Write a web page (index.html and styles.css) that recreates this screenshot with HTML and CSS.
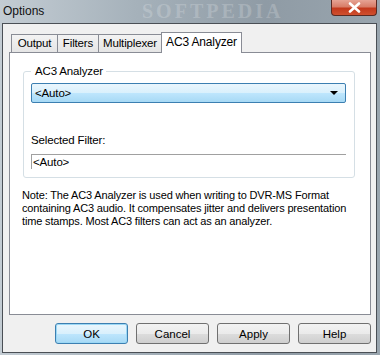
FILE: index.html
```html
<!DOCTYPE html>
<html lang="en">

<head>
    <meta charset="UTF-8">
    <title>Options</title>
    <link rel="stylesheet" href="styles.css">
</head>

<body>
    <div class="window">
        <div class="titlebar">
            <span class="title">Options</span>
            <span class="watermark">SOFTPEDIA</span>
            <button type="button" class="close-btn">
                <svg width="13" height="11" viewBox="0 0 13 11">
                    <path d="M2 1.5 L11 9.5 M11 1.5 L2 9.5" stroke="#fff" stroke-width="2.6" stroke-linecap="round" />
                </svg>
            </button>
        </div>

        <div class="client">
            <div class="tabs">
                <div class="tab tab-output">Output</div>
                <div class="tab tab-filters">Filters</div>
                <div class="tab tab-mux">Multiplexer</div>
                <div class="tab tab-active">AC3 Analyzer</div>
            </div>

            <div class="panel">
                <fieldset class="group">
                    <legend>AC3 Analyzer</legend>
                    <div class="combo">
                        <span>&lt;Auto&gt;</span>
                        <span class="arrow"></span>
                    </div>
                    <div class="field-label">Selected Filter:</div>
                    <div class="static-box">&lt;Auto&gt;</div>
                </fieldset>

                <p class="note">Note: The AC3 Analyzer is used when writing to DVR-MS Format containing AC3 audio. It compensates jitter and delivers presentation time stamps. Most AC3 filters can act as an analyzer.</p>
            </div>

            <div class="buttons">
                <button type="button" class="btn btn-default">OK</button>
                <button type="button" class="btn">Cancel</button>
                <button type="button" class="btn">Apply</button>
                <button type="button" class="btn">Help</button>
            </div>
        </div>
    </div>
</body>

</html>
```

FILE: styles.css
```css
body {
    margin: 0;
    font-family: "Liberation Sans", Arial, sans-serif;
    font-size: 11px;
    letter-spacing: -0.15px;
    color: #000;
}

.window {
    width: 380px;
    height: 355px;
    background: linear-gradient(90deg, #c3ccd3 0%, #a6b2bb 35%, #8f9ba5 70%, #99a5ae 100%);
    overflow: hidden;
}

/* title bar */
.titlebar {
    height: 23px;
    position: relative;
    display: flex;
    align-items: center;
}

.title {
    padding-left: 3px;
    font-size: 12px;
    letter-spacing: 0;
    color: #111;
    padding-bottom: 2px;
}

.watermark {
    position: absolute;
    left: 142px;
    top: 0;
    font-family: "Liberation Serif", serif;
    font-size: 20px;
    font-weight: bold;
    letter-spacing: 3px;
    color: rgba(255, 255, 255, 0.2);
}

.close-btn {
    position: absolute;
    top: 0;
    left: 331px;
    width: 46px;
    height: 16px;
    padding: 0;
    border: 1px solid #5a2a22;
    border-top: none;
    border-radius: 0 0 4px 4px;
    background: linear-gradient(#e6a394 0%, #d87d68 45%, #c3391c 55%, #d0502f 100%);
    display: flex;
    align-items: center;
    justify-content: center;
}

/* client area */
.client {
    margin: 0 3px 0 2px;
    height: 328px;
    border: 1px solid #4a4f55;
    background: #f0f0f0;
    padding: 0 5px 0 6px;
}

.tabs {
    display: flex;
    align-items: flex-end;
    height: 20px;
    margin-top: 8px;
    padding-left: 2px;
    position: relative;
    z-index: 1;
    font-size: 11.5px;
}

.tab {
    height: 17px;
    line-height: 17px;
    text-align: center;
    border: 1px solid #898c95;
    border-bottom: none;
    background: linear-gradient(#f3f3f3, #e5e5e5);
    margin-right: -1px;
}

.tab-output {
    width: 45px;
}

.tab-filters {
    width: 40px;
}

.tab-mux {
    width: 62px;
}

.tab-active {
    width: 79px;
    height: 20px;
    line-height: 19px;
    background: #fff;
    margin-bottom: -1px;
    font-size: 12px;
}

.panel {
    height: 261px;
    border: 1px solid #898c95;
    background: #fff;
    padding: 0 15px 0 13px;
}

/* group box */
.group {
    margin: 12px 0 0;
    height: 105px;
    padding: 6px 8px 0 7px;
    border: 1px solid #d5dfe5;
    border-radius: 3px;
}

.group legend {
    padding: 0 3px 0 4px;
    margin-left: 0;
    font-size: 11.5px;
}

.combo {
    height: 18px;
    border: 1px solid #3c7fb1;
    border-radius: 2px;
    background: linear-gradient(#eaf6fd 0%, #d9f0fc 50%, #bee6fd 51%, #a7d9f5 100%);
    display: flex;
    align-items: center;
    justify-content: space-between;
    padding: 0 7px 0 3px;
    font-size: 11.5px;
}

.arrow {
    width: 0;
    height: 0;
    border-left: 4px solid transparent;
    border-right: 4px solid transparent;
    border-top: 4px solid #000;
}

.field-label {
    margin-top: 29px;
    height: 16px;
    line-height: 16px;
    font-size: 11.5px;
}

.static-box {
    margin-top: 6px;
    height: 14px;
    line-height: 14px;
    border-top: 1px solid #a0a0a0;
    border-left: 1px solid #a0a0a0;
    padding-left: 1px;
    font-size: 11.5px;
}

.note {
    margin: 11px 0 0 -1px;
    line-height: 13px;
}

/* buttons */
.buttons {
    display: flex;
    justify-content: flex-end;
    gap: 8px;
    margin-top: 8px;
}

.btn {
    width: 73px;
    height: 21px;
    padding: 0;
    font-family: inherit;
    font-size: 11.5px;
    color: #000;
    border: 1px solid #707070;
    border-radius: 3px;
    background: linear-gradient(#f2f2f2 0%, #ebebeb 50%, #dddddd 51%, #cfcfcf 100%);
}

.btn-default {
    border-color: #3c7fb1;
    background: linear-gradient(#eaf6fd 0%, #d9f0fc 50%, #bee6fd 51%, #a7d9f5 100%);
    box-shadow: inset 0 0 0 1px #9cd8f5;
}
```
